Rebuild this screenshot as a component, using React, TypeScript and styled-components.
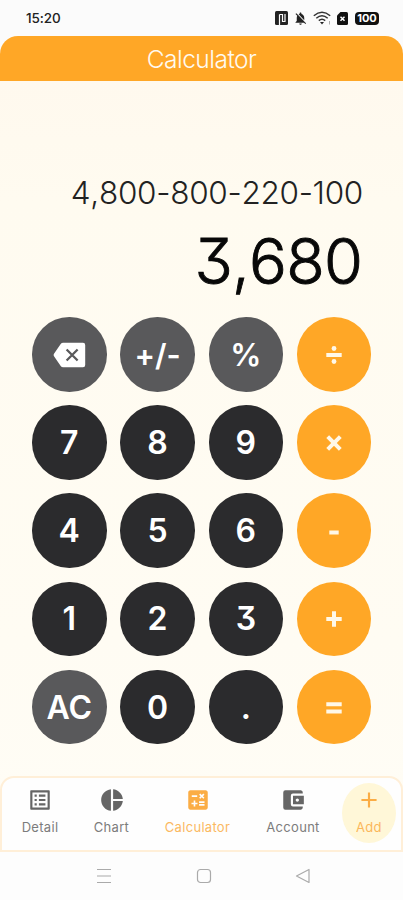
import React from "react";
import styled, { createGlobalStyle } from "styled-components";
import { MdListAlt, MdPieChart, MdCalculate, MdAccountBalanceWallet, MdAdd, MdNotificationsOff } from "react-icons/md";

const GlobalStyle = createGlobalStyle`
  * { box-sizing: border-box; }
  body { margin: 0; background: #fbfbfb; font-family: Inter, "Liberation Sans", sans-serif; }
`;

const Screen = styled.div`
  width: 403px;
  height: 900px;
  display: flex;
  flex-direction: column;
  overflow: hidden;
  background: #fbfbfb;
`;

const StatusBar = styled.div`
  height: 36px;
  flex: none;
  display: flex;
  align-items: center;
  justify-content: space-between;
  padding: 0 24px 0 26px;
  color: #222;
`;

const Clock = styled.span`
  font-size: 13.5px;
  font-weight: 500;
  letter-spacing: -0.1px;
`;

const StatusIcons = styled.div`
  display: flex;
  align-items: center;
  height: 16px;
  svg { display: block; }
`;

const IconSlot = styled.span<{ $gap: number }>`
  margin-right: ${(p) => p.$gap}px;
`;

const Battery = styled.span`
  width: 24px;
  height: 13px;
  border-radius: 4px;
  background: #111;
  color: #fff;
  font-size: 11px;
  line-height: 13px;
  font-weight: 700;
  text-align: center;
`;

const Header = styled.header`
  height: 45px;
  flex: none;
  border-radius: 18px 18px 0 0;
  background: #ffa726;
  color: #fffaf0;
  font-size: 24.5px;
  font-weight: 300;
  line-height: 46px;
  letter-spacing: -0.5px;
  text-align: center;
`;

const Main = styled.main`
  flex: 1;
  display: flex;
  flex-direction: column;
  background: linear-gradient(#fff9ee 0, #fffbf0 120px, #fffcf3 560px, #fffdf6 100%);
`;

const Display = styled.div`
  height: 236px;
  flex: none;
  display: flex;
  flex-direction: column;
  align-items: flex-end;
  padding: 92px 40px 0 0;
  font-feature-settings: "cv09";
  font-kerning: none;
`;

const Expression = styled.div`
  font-size: 31.5px;
  line-height: 40px;
  font-weight: 300;
  letter-spacing: -0.3px;
  color: #222;
`;

const Result = styled.div`
  margin: 9px 1px 0 0;
  font-size: 63px;
  line-height: 78px;
  letter-spacing: -0.8px;
  font-weight: 300;
  -webkit-text-stroke: 0.9px #080808;
  color: #080808;
`;

const Keypad = styled.div`
  display: grid;
  grid-template-columns: repeat(4, 74.5px);
  grid-auto-rows: 74.5px;
  gap: 13.7px 13.8px;
  padding-left: 32px;
`;

type Tone = "digit" | "utility" | "operator";
const tones: Record<Tone, string> = { digit: "#2b2b2d", utility: "#59595b", operator: "#ffa726" };

const Key = styled.button<{ $tone: Tone; $size?: number }>`
  display: flex;
  align-items: center;
  justify-content: center;
  padding: 1px 0 0;
  border: 0;
  border-radius: 50%;
  background: ${(p) => tones[p.$tone]};
  color: ${(p) => (p.$tone === "operator" ? "#fff8e8" : "#fff")};
  font: 600 ${(p) => p.$size ?? 32}px/40px Inter, "Liberation Sans", sans-serif;
  font-feature-settings: "cv09", "calt" 0;
  svg { display: block; }
`;

const TabBar = styled.nav`
  height: 76px;
  flex: none;
  display: flex;
  border: 2px solid #ffefd8;
  border-radius: 14px 14px 0 0;
  background: #fefefe;
  margin-top: auto;
`;

const Tab = styled.a<{ $width: number; $active?: boolean }>`
  width: ${(p) => p.$width}px;
  flex: none;
  display: flex;
  flex-direction: column;
  align-items: center;
  padding-top: 9px;
  color: ${(p) => (p.$active ? "#fbad45" : "#666")};
  svg { display: block; flex: none; }
`;

const TabLabel = styled.span`
  margin-top: 6px;
  font-size: 13px;
  line-height: 16px;
  font-weight: 400;
  letter-spacing: 0.3px;
  opacity: 0.85;
`;

const AddTab = styled(Tab)`
  height: 60px;
  margin: 5px 0 0 6px;
  padding-top: 4px;
  border-radius: 50%;
  background: #fff7d8;
`;

const SystemBar = styled.div`
  height: 48px;
  flex: none;
  display: grid;
  grid-template-columns: 100px 100px 98px;
  padding-left: 2px;
  justify-content: center;
  align-items: center;
  justify-items: center;
  background: #fdfdfd;
  svg { display: block; }
`;

const Backspace = () => (
  <svg width="33" height="26" viewBox="0 0 33 26">
    <path d="M10.2 .8H30a2.2 2.2 0 0 1 2.2 2.2v20a2.2 2.2 0 0 1-2.2 2.2H10.2a3 3 0 0 1-2.5-1.3L1 14.2a2 2 0 0 1 0-2.4L7.7 2.1A3 3 0 0 1 10.2 .8Z" fill="#fff" />
    <path d="m13.600 7.500 11 11m0-11-11 11" stroke="#59595b" strokeWidth="2.300" />
  </svg>
);

type Symbol = "divide" | "times" | "minus" | "plus" | "equals";
const strokes: Record<Symbol, string> = {
  divide: "M2.300 10h15.400",
  times: "m3.700 3.700 12.600 12.600M16.300 3.700 3.700 16.300",
  minus: "M5.300 11.500h9.400",
  plus: "M2.300 10h15.400M10 2.300v15.400",
  equals: "M2.300 6.300h15.400M2.300 13.500h15.400",
};

const Operator = ({ name }: { name: Symbol }) => (
  <svg width="20" height="20" viewBox="0 0 20 20" aria-label={name}>
    <path d={strokes[name]} fill="none" stroke="currentColor" strokeWidth="4" />
    {name === "divide" && (
      <>
        <circle cx="10" cy="3.500" r="2.400" fill="currentColor" />
        <circle cx="10" cy="16.500" r="2.400" fill="currentColor" />
      </>
    )}
  </svg>
);

const Nfc = () => (
  <svg width="13" height="14" viewBox="0 0 13 14">
    <rect width="13" height="14" rx="1.500" fill="#222" />
    <path d="M4.500 14V3.500M4.500 3.500H7.500V10.500H10V3" fill="none" stroke="#fafafa" strokeWidth="1.200" />
  </svg>
);

const Wifi = () => (
  <svg width="19" height="14" viewBox="0 0 19 14" fill="none" stroke="#333" strokeWidth="1.500">
    <path d="M.8 4.800Q9 -2.200 17.200 4.800M3.300 7.200Q9 2.200 14.700 7.200M5.800 9.600Q9 6.800 12.200 9.600" />
    <path d="m7 11 2 2.500 2-2.500Z" fill="#222" stroke="none" />
    <path d="M16.500 10v3.500" strokeWidth="1" stroke="#aaa" />
  </svg>
);

const Sim = () => (
  <svg width="11" height="13" viewBox="0 0 11 13">
    <path d="M3.500 0H9.500a1.500 1.500 0 0 1 1.500 1.500v10A1.500 1.500 0 0 1 9.500 13h-8A1.500 1.500 0 0 1 0 11.500v-8Z" fill="#111" />
    <path d="m3.500 4.800 4 4m0-4-4 4" stroke="#fff" strokeWidth="1.500" />
  </svg>
);

const keys: { tone: Tone; content: React.ReactNode; size?: number }[] = [
  { tone: "utility", content: <Backspace /> },
  { tone: "utility", content: "+/-", size: 30.5 },
  { tone: "utility", content: "%", size: 31 },
  { tone: "operator", content: <Operator name="divide" /> },
  { tone: "digit", content: "7" },
  { tone: "digit", content: "8" },
  { tone: "digit", content: "9" },
  { tone: "operator", content: <Operator name="times" /> },
  { tone: "digit", content: "4" },
  { tone: "digit", content: "5" },
  { tone: "digit", content: "6" },
  { tone: "operator", content: <Operator name="minus" /> },
  { tone: "digit", content: "1" },
  { tone: "digit", content: "2" },
  { tone: "digit", content: "3" },
  { tone: "operator", content: <Operator name="plus" /> },
  { tone: "utility", content: "AC" },
  { tone: "digit", content: "0" },
  { tone: "digit", content: "." },
  { tone: "operator", content: <Operator name="equals" /> },
];

export default function App() {
  return (
    <>
      <GlobalStyle />
      <Screen>
        <StatusBar>
          <Clock>15:20</Clock>
          <StatusIcons>
            <IconSlot $gap={5}><Nfc /></IconSlot>
            <IconSlot $gap={5}><MdNotificationsOff size={15} /></IconSlot>
            <IconSlot $gap={5}><Wifi /></IconSlot>
            <IconSlot $gap={7}><Sim /></IconSlot>
            <Battery>100</Battery>
          </StatusIcons>
        </StatusBar>
        <Header>Calculator</Header>
        <Main>
          <Display>
            <Expression>4,800-800-220-100</Expression>
            <Result>3,680</Result>
          </Display>
          <Keypad>
            {keys.map((k, i) => (
              <Key key={i} $tone={k.tone} $size={k.size}>{k.content}</Key>
            ))}
          </Keypad>
          <TabBar>
            <Tab $width={76}><MdListAlt size={26} /><TabLabel>Detail</TabLabel></Tab>
            <Tab $width={67}><MdPieChart size={26} /><TabLabel>Chart</TabLabel></Tab>
            <Tab $width={105} $active><MdCalculate size={26} /><TabLabel>Calculator</TabLabel></Tab>
            <Tab $width={86}><MdAccountBalanceWallet size={26} /><TabLabel>Account</TabLabel></Tab>
            <AddTab $width={54} $active><MdAdd size={26} /><TabLabel>Add</TabLabel></AddTab>
          </TabBar>
        </Main>
        <SystemBar>
          <svg width="16" height="16" fill="none" stroke="#aaa" strokeWidth="1.200"><path d="M1 1.500h14M1 8h14M1 14.500h14" /></svg>
          <svg width="16" height="16" fill="none" stroke="#aaa" strokeWidth="1.200"><rect x="1.500" y="1.500" width="13" height="13" rx="3" /></svg>
          <svg width="16" height="16" fill="none" stroke="#aaa" strokeWidth="1.200"><path d="M14 1.500v13L1.500 8Z" strokeLinejoin="round" /></svg>
        </SystemBar>
      </Screen>
    </>
  );
}
